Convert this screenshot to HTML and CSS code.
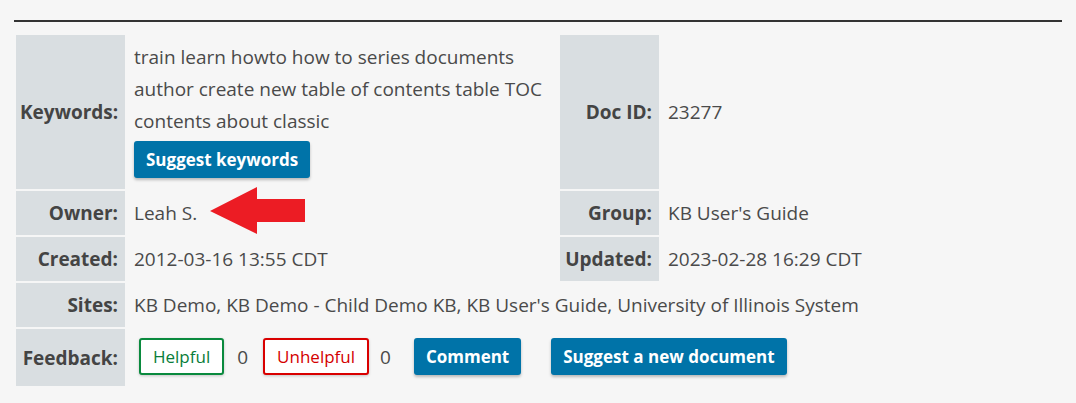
FILE: index.html
```html
<!DOCTYPE html>
<html>
<head>
<meta charset="utf-8">
<link rel="stylesheet" href="styles.css">
</head>
<body>
<div class="page">
  <div class="rule"></div>
  <table class="details">
    <colgroup>
      <col class="c-l1"><col class="c-v1"><col class="c-l2"><col class="c-v2">
    </colgroup>
    <tr>
      <th>Keywords:</th>
      <td>
        <div class="kw">train learn howto how to series documents author create new table of contents table TOC contents about classic</div>
        <div class="kw-actions"><button class="btn btn-blue">Suggest keywords</button></div>
      </td>
      <th>Doc ID:</th>
      <td>23277</td>
    </tr>
    <tr>
      <th>Owner:</th>
      <td class="owner">Leah S.
        <svg class="arrow" width="96" height="47" viewBox="0 0 96 47"><polygon points="0,24 47,0 47,12 95,12 95,35 47,35 47,47" fill="#ec1c24"/></svg>
      </td>
      <th>Group:</th>
      <td>KB User's Guide</td>
    </tr>
    <tr>
      <th>Created:</th>
      <td>2012-03-16 13:55 CDT</td>
      <th>Updated:</th>
      <td>2023-02-28 16:29 CDT</td>
    </tr>
    <tr>
      <th>Sites:</th>
      <td colspan="3">KB Demo, KB Demo - Child Demo KB, KB User's Guide, University of Illinois System</td>
    </tr>
    <tr>
      <th>Feedback:</th>
      <td colspan="3">
        <div class="feedback">
          <button class="btn btn-green">Helpful</button>
          <span class="count count-1">0</span>
          <button class="btn btn-red">Unhelpful</button>
          <span class="count count-2">0</span>
          <button class="btn btn-blue">Comment</button>
          <button class="btn btn-blue btn-wide">Suggest a new document</button>
        </div>
      </td>
    </tr>
  </table>
</div>
</body>
</html>
```
FILE: styles.css
```css
html, body {
  margin: 0;
  background: #f6f6f6;
}
body {
  font-family: "Open Sans", "Liberation Sans", sans-serif;
  color: #464646;
}
.page {
  padding: 20px 14px 0 14px;
}
.rule {
  height: 2px;
  background: #333;
}
.details {
  margin-top: 11px;
  border-collapse: separate;
  border-spacing: 2px;
  width: 1050px;
  table-layout: fixed;
}
.c-l1 { width: 109px; }
.c-v1 { width: 431px; }
.c-l2 { width: 99px; }
.c-v2 { width: auto; }
th, td {
  font-size: 19px;
  line-height: 32px;
  padding: 6px 7px;
  vertical-align: middle;
}
th {
  background: #d9dee1;
  text-align: right;
  font-weight: 700;
  color: #444;
  padding-right: 7px;
  padding-left: 4px;
}
td {
  text-align: left;
  color: #4a4a4a;
}
.owner {
  position: relative;
}
.arrow {
  position: absolute;
  left: 83px;
  top: -4px;
}
.kw-actions {
  display: flex;
  padding: 4px 0 5px 0;
}
.btn {
  font-family: inherit;
  font-size: 17px;
  font-weight: 700;
  line-height: 20px;
  height: 37px;
  padding: 0 12px;
  border-radius: 3px;
  border: 0;
  cursor: pointer;
}
.btn-blue {
  background: #0073a8;
  color: #fff;
  box-shadow: 0 2px 3px rgba(0, 0, 0, 0.25);
}
.btn-green {
  background: #fff;
  color: #0a7d3a;
  border: 2px solid #0a8a3e;
  font-weight: 500;
  box-shadow: 0 1px 3px rgba(0, 0, 0, 0.2);
}
.btn-red {
  background: #fff;
  color: #d40000;
  border: 2px solid #d90000;
  font-weight: 500;
  box-shadow: 0 1px 3px rgba(0, 0, 0, 0.2);
}
.feedback {
  display: flex;
  align-items: center;
  padding: 3px 0 5px 5px;
}
.count-1 {
  margin: 0 15px 0 13px;
}
.count-2 {
  margin: 0 23px 0 11px;
}
.btn-wide {
  margin-left: 30px;
}
```
